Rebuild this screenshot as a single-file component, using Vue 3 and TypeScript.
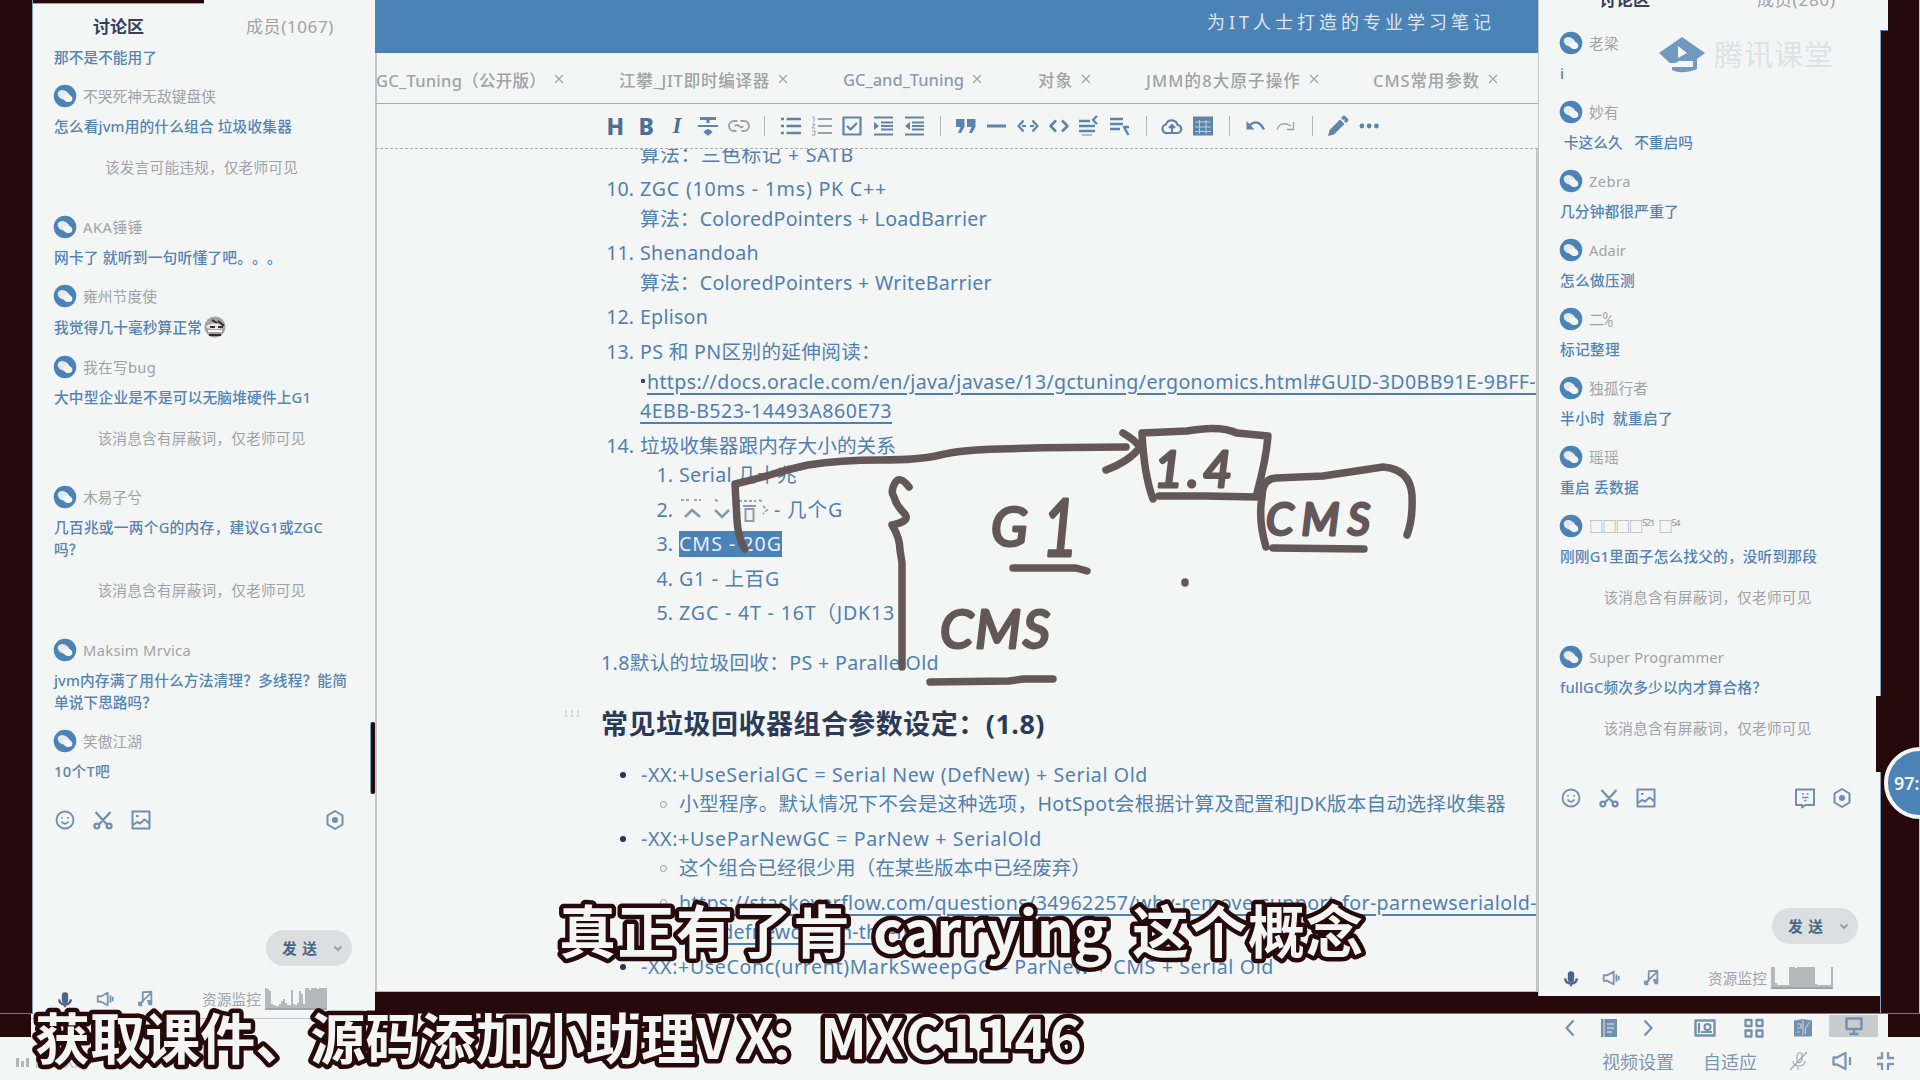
<script setup lang="ts">
import { h } from 'vue'
import type { FunctionalComponent } from 'vue'

interface Message {
  name?: string
  nameWidth?: number
  lines: { text: string; width: number; emoji?: boolean }[]
  notice?: { text: string; width: number }
}
interface DocLine {
  kind: 'top' | 'next'
  level: 1 | 2
  marker?: string
  text: string
  width: number
  variant?: 'link' | 'selected' | 'covered' | 'bulletlink'
}

const hidden = { text: '该消息含有屏蔽词，仅老师可见', width: 208 }

const leftMessages: Message[] = [
  { lines: [{ text: '那不是不能用了', width: 103 }] },
  {
    name: '不哭死神无敌键盘侠', nameWidth: 133,
    lines: [{ text: '怎么看jvm用的什么组合 垃圾收集器', width: 238 }],
    notice: { text: '该发言可能违规，仅老师可见', width: 193 },
  },
  { name: 'AKA锤锤', nameWidth: 60, lines: [{ text: '网卡了 就听到一句听懂了吧。。。', width: 228 }] },
  { name: '雍州节度使', nameWidth: 74, lines: [{ text: '我觉得几十毫秒算正常', width: 148, emoji: true }] },
  { name: '我在写bug', nameWidth: 73, lines: [{ text: '大中型企业是不是可以无脑堆硬件上G1', width: 257 }], notice: hidden },
  { name: '木易子兮', nameWidth: 59, lines: [{ text: '几百兆或一两个G的内存，建议G1或ZGC', width: 269 }, { text: '吗？', width: 29 }], notice: hidden },
  { name: 'Maksim Mrvica', nameWidth: 108, lines: [{ text: 'jvm内存满了用什么方法清理？多线程？能简', width: 293 }, { text: '单说下思路吗？', width: 103 }] },
  { name: '笑傲江湖', nameWidth: 59, lines: [{ text: '10个T吧', width: 56 }] },
]

const rightMessages: Message[] = [
  { name: '老梁', nameWidth: 30, lines: [{ text: 'i', width: 8 }] },
  { name: '妙有', nameWidth: 30, lines: [{ text: ' 卡这么久   不重启吗', width: 133 }] },
  { name: 'Zebra', nameWidth: 42, lines: [{ text: '几分钟都很严重了', width: 119 }] },
  { name: 'Adair', nameWidth: 37, lines: [{ text: '怎么做压测', width: 75 }] },
  { name: '二⁰⁄₀', nameWidth: 23, lines: [{ text: '标记整理', width: 60 }] },
  { name: '独孤行者', nameWidth: 59, lines: [{ text: '半小时  就重启了', width: 113 }] },
  { name: '瑶瑶', nameWidth: 30, lines: [{ text: '重启 丢数据', width: 79 }] },
  { name: '□□□□⁵²¹  □⁵⁴', nameWidth: 90, lines: [{ text: '刚刚G1里面子怎么找父的，没听到那段', width: 257 }], notice: hidden },
  { name: 'Super Programmer', nameWidth: 135, lines: [{ text: 'fullGC频次多少以内才算合格？', width: 207 }], notice: hidden },
]

const tabs = [
  { text: 'GC_Tuning（公开版）', width: 170, slot: 243 },
  { text: '江攀_JIT即时编译器', width: 151, slot: 224 },
  { text: 'GC_and_Tuning', width: 121, slot: 195 },
  { text: '对象', width: 35, slot: 108 },
  { text: 'JMM的8大原子操作', width: 155, slot: 227 },
  { text: 'CMS常用参数', width: 107, slot: 150 },
]

const tools = ['H', 'B', 'I', 'strike', 'link', '|', 'ul', 'ol', 'check', 'indent', 'outdent', '|', 'quote', 'minus', 'arrows', 'code', 'rowUp', 'rowDown', '|', 'cloud', 'table', '|', 'undo', 'redo', '|', 'pencil', 'dots']

const gcList: DocLine[] = [
  { kind: 'next', level: 1, text: '算法：三色标记 + SATB', width: 214 },
  { kind: 'top', level: 1, marker: '10.', text: 'ZGC (10ms - 1ms) PK C++', width: 247 },
  { kind: 'next', level: 1, text: '算法：ColoredPointers + LoadBarrier', width: 347 },
  { kind: 'top', level: 1, marker: '11.', text: 'Shenandoah', width: 119 },
  { kind: 'next', level: 1, text: '算法：ColoredPointers + WriteBarrier', width: 352 },
  { kind: 'top', level: 1, marker: '12.', text: 'Eplison', width: 68 },
  { kind: 'top', level: 1, marker: '13.', text: 'PS 和 PN区别的延伸阅读：', width: 241 },
  { kind: 'next', level: 1, text: 'https://docs.oracle.com/en/java/javase/13/gctuning/ergonomics.html#GUID-3D0BB91E-9BFF-', width: 889, variant: 'bulletlink' },
  { kind: 'next', level: 1, text: '4EBB-B523-14493A860E73', width: 252, variant: 'link' },
  { kind: 'top', level: 1, marker: '14.', text: '垃圾收集器跟内存大小的关系', width: 256 },
  { kind: 'next', level: 2, marker: '1.', text: 'Serial 几十兆', width: 118 },
  { kind: 'top', level: 2, marker: '2.', text: '- 几个G', width: 69, variant: 'covered' },
  { kind: 'top', level: 2, marker: '3.', text: 'CMS - 20G', width: 103, variant: 'selected' },
  { kind: 'top', level: 2, marker: '4.', text: 'G1 - 上百G', width: 101 },
  { kind: 'top', level: 2, marker: '5.', text: 'ZGC - 4T - 16T（JDK13', width: 216 },
]

const paramList: DocLine[] = [
  { kind: 'next', level: 1, marker: '•', text: '-XX:+UseSerialGC = Serial New (DefNew) + Serial Old', width: 507 },
  { kind: 'next', level: 2, marker: 'o', text: '小型程序。默认情况下不会是这种选项，HotSpot会根据计算及配置和JDK版本自动选择收集器', width: 827 },
  { kind: 'top', level: 1, marker: '•', text: '-XX:+UseParNewGC = ParNew + SerialOld', width: 401 },
  { kind: 'next', level: 2, marker: 'o', text: '这个组合已经很少用（在某些版本中已经废弃）', width: 412 },
  { kind: 'top', level: 2, marker: 'o', text: 'https://stackoverflow.com/questions/34962257/why-remove-support-for-parnewserialold-', width: 858, variant: 'link' },
  { kind: 'next', level: 2, text: 'and-defnewcms-in-the-future', width: 275, variant: 'link' },
  { kind: 'top', level: 1, marker: '•', text: '-XX:+UseConc(urrent)MarkSweepGC = ParNew + CMS + Serial Old', width: 633 },
]

const leftBars = [22, 19, 17, 4, 3, 2, 2, 4, 7, 9, 5, 3, 3, 18, 4, 3, 5, 17, 14, 4, 22, 20, 18, 22, 20, 22, 19, 20, 21, 22, 21]
const rightBars = [22, 20, 4, 2, 2, 2, 2, 2, 2, 20, 20, 21, 19, 21, 22, 22, 20, 22, 20, 21, 22, 20, 3, 2, 2, 2, 2, 2, 2, 2, 22]

/* Tunes tracking so that a label occupies the given width in pixels. */
const vFit = {
  mounted(el: HTMLElement, binding: { value?: number }) {
    if (!binding.value) return
    const count = Array.from(el.textContent ?? '').length
    const natural = el.getBoundingClientRect().width
    el.style.letterSpacing = `${((binding.value - natural) / count).toFixed(3)}px`
  },
}

type Shape = { d: string; fill?: boolean; w?: number; light?: boolean }
const shapes: Record<string, Shape[]> = {
  strike: [{ d: 'M3 3.500H19M11 3.500V8M11 14V19M7.500 16L11 19L14.500 16', w: 3 }, { d: 'M1 11H21', w: 2 }],
  link: [{ d: 'M9.500 6H6a5 5 0 0 0 0 10H8.500M12.500 6H16a5 5 0 0 1 0 10H13.500M7 11.500Q8 9 11 11T15 11', w: 2 }],
  ul: [{ d: 'M6.500 4H21M6.500 11H21M6.500 18H21M1 4H4M1 11H4M1 18H4', w: 2.6 }],
  ol: [{ d: 'M7 4H21M7 11H21M7 18H21', w: 2 }, { d: 'M1.500 2H3V7M1 9H4L1 13H4M1 16H4V20H1', w: 1 }],
  check: [{ d: 'M2.500 2.500H19.500V19.500H2.500ZM6 11L9.500 14.500L16 8', w: 2.2 }],
  indent: [{ d: 'M2 2.500H21M9 7.500H21M9 11H21M9 14.500H21M2 19.500H21', w: 2.2 }, { d: 'M2 7L7 11L2 15Z', fill: true }],
  outdent: [{ d: 'M2 2.500H21M9 7.500H21M9 11H21M9 14.500H21M2 19.500H21', w: 2.2 }, { d: 'M7 7L2 11L7 15Z', fill: true }],
  quote: [{ d: 'M1 4H9.500V12L6 18H3L5.500 12H1ZM12 4H20.500V12L17 18H14L16.500 12H12Z', fill: true }],
  minus: [{ d: 'M1 11H20', w: 3 }],
  arrows: [{ d: 'M6.500 5.500L1.500 11L6.500 16.500M15.500 5.500L20.500 11L15.500 16.500M5 11H9M13 11H17', w: 2.2 }],
  code: [{ d: 'M8 5.500L2.500 11L8 16.500M14 5.500L19.500 11L14 16.500', w: 2.6 }],
  rowUp: [{ d: 'M1 6H12M1 11H17M1 16H17M19 1L15 5L19 9', w: 2.4 }, { d: 'M4 20H14', w: 1 }],
  rowDown: [{ d: 'M1 4H14M1 9H14M1 14H11', w: 2.4 }, { d: 'M20 12H15L19.500 20', w: 2.4 }],
  cloud: [{ d: 'M6.500 18H16a4 4 0 0 0 .5-8A6 6 0 0 0 5 9.500A4.300 4.300 0 0 0 6.500 18ZM11 17V10M8 13L11 10L14 13', w: 2.2 }],
  table: [{ d: 'M1 1.500H21V20.500H1Z', fill: true }, { d: 'M3 7H19M3 12H19M3 16.500H19M7.500 5V19M14 5V19', w: 1, light: true }],
  undo: [{ d: 'M2.500 6V14.500H10.500Z', fill: true }, { d: 'M6 10Q14 3 20 14.500', w: 2.4 }],
  redo: [{ d: 'M2 14.500Q6 5 16 11M18.500 7V14.500H12', w: 1.4 }],
  pencil: [{ d: 'M1 21L2.500 15L13 4.500L17.500 9L7 19.500Z', fill: true }, { d: 'M15 4L17 2L20 5L18 7', w: 3 }],
  dots: [{ d: 'M1.500 11a2.400 2.400 0 1 0 4.800 0a2.400 2.400 0 1 0-4.800 0M8.700 11a2.400 2.400 0 1 0 4.800 0a2.400 2.400 0 1 0-4.800 0M16 11a2.400 2.400 0 1 0 4.800 0a2.400 2.400 0 1 0-4.800 0', fill: true }],
  smile: [{ d: 'M2.500 11a8.500 8.500 0 1 0 17 0a8.500 8.500 0 1 0-17 0M7.500 12.500Q11 17 14.500 12.500M8 8V9.500M14 8V9.500', w: 1.8 }],
  scissors: [{ d: 'M3.500 3L15.500 16M18.500 3L6.500 16M2.500 17a2.400 2.400 0 1 0 4.800 0a2.400 2.400 0 1 0-4.800 0M14.700 17a2.400 2.400 0 1 0 4.800 0a2.400 2.400 0 1 0-4.800 0', w: 2.3 }],
  image: [{ d: 'M2.500 2.500H19.500V19.500H2.500ZM3 16L7 13L10 14.500L14.500 10.500L19 14M6 7H8.500', w: 2 }],
  hex: [{ d: 'M11 2L18.500 6.500V15.500L11 20L3.500 15.500V6.500Z', w: 2 }, { d: 'M8 11a3 3 0 1 0 6 0a3 3 0 1 0-6 0', fill: true }],
  bubble: [{ d: 'M2 2.500H20V18H11.500L8 20.500V18H2Z', w: 2 }, { d: 'M8 7H10M12.500 7H14.500M8 10.500H14.500M10 13.500H12.500', w: 1.5 }],
  mic: [{ d: 'M7.500 7a3.500 3.500 0 0 1 7 0V12a3.500 3.500 0 0 1-7 0Z', fill: true }, { d: 'M4.500 11.500Q5 17 11 17T17.500 11.500M11 17V20', w: 2.6 }],
  sound: [{ d: 'M3 8H7L14 4V18L7 14H3ZM17 7V15M19.500 8.500V13.500', w: 2 }],
  music: [{ d: 'M8.500 15V3.500L18 3V13.500M4 17.500L18 4', w: 2 }, { d: 'M3 14H8V19H4ZM13 12H19V18H15Z', fill: true }],
  left: [{ d: 'M14.500 3.500L7.500 11L14.500 18.500', w: 2.2 }],
  right: [{ d: 'M7.500 3.500L14.500 11L7.500 18.500', w: 2.2 }],
  notebook: [{ d: 'M3 2H19V20H3Z', fill: true }, { d: 'M6 2V20M9 7H16M9 11H16M9 15H14', w: 1.3, light: true }],
  photo: [{ d: 'M1.500 3.500H20.500V18.500H1.500Z', w: 2.4 }, { d: 'M5 6V16M7 15H18M10.500 10a3 3 0 1 0 6 0a3 3 0 1 0-6 0', w: 2.2 }],
  grid: [{ d: 'M2.500 3H8.500V9H2.500ZM13.500 3H19.500V9H13.500ZM2.500 13.500H8.500V19.500H2.500ZM13.500 13.500H19.500V19.500H13.500Z', w: 2.3 }],
  book: [{ d: 'M2 3.500L11 2L20 3.500V19.500H2Z', fill: true }, { d: 'M5 7H9V11H5M13.500 17V11L17.500 5M11 3V18M5 15H8', w: 1.2, light: true }],
  board: [{ d: 'M3.500 3.500H18.500V14H3.500ZM11 14V19M6.500 19H15.500', w: 2.4 }],
  micOff: [{ d: 'M9 12V5Q11 1 14 4V10Q12 14 9 12M5 11Q5 16 12 16Q17 15 17 11M2 20L19 2M10 17V20', w: 1.1 }],
  volume: [{ d: 'M2.500 7.500H6L14.500 3V19L6 14.500H2.500ZM19 7V15', w: 2.3 }],
  shrink: [{ d: 'M3 8H8V2M14 2V8H20M3 14H8V20M20 14H14V20', w: 2.3 }],
}

const Icon: FunctionalComponent<{ name: string; size?: number }> = (props) =>
  h(
    'svg',
    { width: props.size ?? 22, height: props.size ?? 22, viewBox: '0 0 22 22', fill: 'none', 'stroke-linejoin': 'round' },
    (shapes[props.name] ?? []).map((s) =>
      h('path', {
        d: s.d,
        fill: s.fill ? 'currentColor' : 'none',
        stroke: s.fill ? 'none' : s.light ? '#c3ced8' : 'currentColor',
        'stroke-width': s.w ?? 2,
      }),
    ),
  )
Icon.props = ['name', 'size']

const panels = [
  { id: 'left', members: '成员(1067)', membersWidth: 88, list: leftMessages, bars: leftBars, chat: false },
  { id: 'right', members: '成员(280)', membersWidth: 79, list: rightMessages, bars: rightBars, chat: true },
]
</script>

<template>
  <div class="screen">
    <div class="main">
      <div class="bezel bezel-left"></div>

      <template v-for="p in panels" :key="p.id">
        <aside class="panel" :class="p.id">
          <div v-if="p.id === 'left'" class="notch"></div>
          <header class="panel-tabs">
            <b v-fit="51">讨论区</b>
            <span v-fit="p.membersWidth">{{ p.members }}</span>
          </header>
          <div class="messages">
            <div v-for="(m, i) in p.list" :key="i" class="message">
              <div v-if="m.name" class="author">
                <svg class="avatar" width="24" height="24" viewBox="0 0 24 24">
                  <circle cx="12" cy="12" r="11.300" fill="#4c83b6" />
                  <ellipse cx="10.500" cy="10.800" rx="6" ry="4.500" transform="rotate(22 10.500 10.800)" fill="#e5e9ec" />
                  <ellipse cx="14.800" cy="14.200" rx="4.700" ry="3.700" transform="rotate(22 14.800 14.200)" fill="#f4f6f5" />
                </svg>
                <span v-fit="m.nameWidth" class="fit">{{ m.name }}</span>
              </div>
              <div class="body">
                <div v-for="l in m.lines" :key="l.text" class="body-line" :class="{ tall: l.emoji }">
                  <span v-fit="l.width" class="fit">{{ l.text }}</span>
                  <svg v-if="l.emoji" width="24" height="24" viewBox="0 0 24 24">
                    <circle cx="12" cy="12" r="10.500" fill="#a0a2a6" />
                    <path d="M3 11Q12 5 22 12Q15 16 4 13Z" fill="#e5e7e7" />
                    <path d="M9 5l5 3M15 6l6 5M6 20h12M7 12h5M15 12h5" stroke="#3c292b" stroke-width="2" />
                    <path d="M5 16h14" stroke="#f4f6f5" stroke-width="2" />
                  </svg>
                </div>
              </div>
              <div v-if="m.notice" class="notice"><span v-fit="m.notice.width" class="fit">{{ m.notice.text }}</span></div>
            </div>
          </div>
          <div class="composer">
            <div class="composer-tools">
              <Icon name="smile" /><Icon name="scissors" /><Icon name="image" />
              <span class="grow"></span>
              <Icon v-if="p.chat" name="bubble" /><Icon name="hex" />
            </div>
            <div class="send">
              <b v-fit="36" class="fit">发 送</b>
              <svg width="10" height="10" viewBox="0 0 10 10"><path d="M1.500 3.500L5 7L8.500 3.500" fill="none" stroke="#9a9fa5" stroke-width="2" /></svg>
            </div>
          </div>
          <div class="status">
            <span class="mic"><Icon name="mic" :size="20" /></span><Icon name="sound" :size="20" /><Icon name="music" :size="20" />
            <span class="grow"></span>
            <span v-fit="59" class="fit monitor">资源监控</span>
            <span class="graph"><i v-for="(b, i) in p.bars" :key="i" :style="{ height: b + 'px' }"></i></span>
          </div>
          <div v-if="p.id === 'left'" class="scrollbar"></div>
          <div v-if="p.id === 'right'" class="watermark">
            <svg width="48" height="38" viewBox="0 0 48 38">
              <path d="M24 1L47 17L39 23V33Q24 39 14 34V31H35V25H21L14 29L1 17Z" fill="#7199bf" />
              <path d="M20 10L29 17L20 22Z" fill="#f4f6f5" />
              <path d="M10 27H33V31H14Z" fill="#f4f6f5" />
            </svg>
            <span v-fit="120" class="fit">腾讯课堂</span>
          </div>
        </aside>

        <section v-if="p.id === 'left'" class="editor">
          <div class="banner"><span v-fit="288" class="fit">为IT人士打造的专业学习笔记</span></div>
          <nav class="tabs">
            <div v-for="t in tabs" :key="t.text" class="tab" :style="{ width: t.slot + 'px' }">
              <span v-fit="t.width" class="fit">{{ t.text }}</span>
              <svg width="10" height="10" viewBox="0 0 10 10"><path d="M1 1L9 9M9 1L1 9" stroke="#a0a2a6" stroke-width="1.200" /></svg>
            </div>
          </nav>
          <div class="toolbar">
            <template v-for="(t, i) in tools" :key="i">
              <span v-if="t === '|'" class="sep"></span>
              <span v-else class="tool" :class="{ letter: t.length === 1, italic: t === 'I', dim: t === 'redo' || t === 'ol' || t === 'link' }">
                <template v-if="t.length === 1">{{ t }}</template>
                <Icon v-else :name="t" />
              </span>
            </template>
          </div>
          <article class="doc">
            <div class="list numbers">
              <div v-for="(l, i) in gcList" :key="i" class="line" :class="[l.kind, 'level-' + l.level]">
                <span class="marker">{{ l.marker }}</span>
                <i v-if="l.variant === 'bulletlink'" class="dot"></i>
                <svg v-if="l.variant === 'covered'" class="find" width="95" height="30" viewBox="0 0 95 30">
                  <path d="M2 6H10M15 6H22M36 6L39 7M60 7H77M80 6L84 8M84 12L88 16L84 20" fill="none" stroke="#a0a2a6" stroke-width="2" stroke-dasharray="3 2" />
                  <path d="M6 23L13 16L21 23M36 16L43 23L50 16" fill="none" stroke="#8199b2" stroke-width="2.500" />
                  <path d="M64 12H77M66.500 15H74.500V27H66.500Z" fill="none" stroke="#8c9baf" stroke-width="2" />
                </svg>
                <span v-fit="l.width" class="fit" :class="l.variant">{{ l.text }}</span>
              </div>
            </div>
            <p><span v-fit="338" class="fit">1.8默认的垃圾回收：PS + ParallelOld</span></p>
            <h2>
              <svg class="handle" width="15" height="8" viewBox="0 0 15 8"><path d="M1 0V8M7 0V8M13 0V8" stroke="#b4b6b9" stroke-dasharray="3 1" /></svg>
              <span v-fit="444" class="fit">常见垃圾回收器组合参数设定：(1.8)</span>
            </h2>
            <div class="list bullets">
              <div v-for="(l, i) in paramList" :key="i" class="line" :class="[l.kind, 'level-' + l.level]">
                <span class="marker"><i v-if="l.marker" :class="l.marker === 'o' ? 'ring' : 'disc'"></i></span>
                <span v-fit="l.width" class="fit" :class="l.variant">{{ l.text }}</span>
              </div>
            </div>
          </article>
        </section>
      </template>

      <div class="bezel bezel-right">
        <i class="corner"></i><i class="step"></i>
        <div class="badge"><b>97:</b></div>
      </div>
    </div>

    <footer class="footer">
      <div class="footer-top">
        <i class="dark dark-left"></i>
        <span class="grow footer-line"></span>
        <div class="views">
          <Icon name="left" /><Icon name="notebook" /><Icon name="right" />
          <Icon name="photo" /><Icon name="grid" /><Icon name="book" />
          <span class="active"><Icon name="board" /></span>
        </div>
        <i class="dark dark-right"></i>
      </div>
      <div class="footer-bottom">
        <span class="network"><i></i><i></i><i></i><em>网络状态</em></span>
        <span class="grow"></span>
        <span v-fit="72" class="fit setting">视频设置</span>
        <span v-fit="54" class="fit auto">自适应</span>
        <span class="off"><Icon name="micOff" /></span><Icon name="volume" /><Icon name="shrink" />
      </div>
    </footer>

    <svg class="ink" width="1920" height="1080" viewBox="0 0 1920 1080">
      <g class="rim">
        <path d="M745 549Q738 538 737 520T735 484Q760 478 773 474T808 465Q840 460 880 460T940 455T1000 449Q1060 447 1126 447" />
        <path d="M1123 433Q1135 440 1140 447Q1130 461 1106 470" />
        <path d="M1153 499Q1144 475 1142 433L1187 431Q1220 425 1237 433L1268 436Q1266 460 1257 493M1159 496L1205 496L1258 497" />
        <path d="M1266 547Q1258 520 1262 497Q1262 479 1276 478L1323 476L1383 467Q1410 469 1412 495Q1413 520 1407 535M1273 548L1364 549" />
        <path d="M909 487Q900 475 895 483T894 497Q896 505 904 513T892 525Q900 538 900 550L902 563V667" />
        <path d="M1013 568L1076 568L1087 571M930 682L1009 681L1023 679L1053 679M1185 582V583" />
      </g>
      <g class="words">
        <text x="1154" y="487" font-size="50" textLength="78">1.4</text>
        <text x="1266" y="535" font-size="44" textLength="104">CMS</text>
        <text x="991" y="546" font-size="54">G</text>
        <text x="1042" y="556" font-size="80" textLength="36" lengthAdjust="spacingAndGlyphs">1</text>
        <text x="940" y="648" font-size="53" textLength="110">CMS</text>
      </g>
    </svg>

    <svg class="captions" width="1920" height="1080" viewBox="0 0 1920 1080">
      <g class="caption" font-size="57">
        <text x="559" y="953" textLength="291">真正有了肯</text>
        <text x="873" y="953" font-size="58" textLength="235">carrying</text>
        <text x="1132" y="953" textLength="231">这个概念</text>
      </g>
      <g class="caption" font-size="55">
        <text x="35" y="1059" textLength="661">获取课件、源码添加小助理</text>
        <text x="696" y="1059" textLength="78">VX</text>
        <text x="768" y="1059">：</text>
        <text x="820" y="1059" textLength="262">MXC1146</text>
      </g>
    </svg>
  </div>
</template>

<style>
body { background: #f4f6f5; overflow: hidden; }
</style>

<style scoped>
.screen {
  position: relative;
  display: flex;
  flex-direction: column;
  width: 1920px;
  height: 1080px;
  overflow: hidden;
  background: #f4f6f5;
  color: #4c83b6;
  font-family: "Noto Sans", "Noto Sans CJK SC", sans-serif;
  text-spacing-trim: space-all;
}
svg { display: block; flex: none; }
.fit { display: inline-block; white-space: pre; flex: none; }
.grow { flex: 1; }
.main { display: flex; align-items: flex-start; height: 1014px; background: #260a0b; flex: none; border-bottom: 1px solid #4c83b6; box-sizing: border-box; }
.bezel { flex: none; height: 1013px; box-sizing: border-box; }
.bezel-left { width: 33px; border-right: 1px solid #7c9fc2; }

.panel { position: relative; display: flex; flex-direction: column; flex: none; box-sizing: border-box; background: #f4f6f5; overflow: hidden; font-size: 14.700px; line-height: 22px; }
.panel.left { width: 342px; height: 1014px; padding-left: 21px; }
.panel.right { width: 342px; height: 996px; padding-left: 21px; border-left: 1px solid #c4c6c8; }
.notch { position: absolute; left: 0; top: 0; width: 171px; height: 3px; background: #260a0b; border-bottom: 1px solid #a0a2a6; }
.panel-tabs { display: flex; flex: none; height: 46px; align-items: center; color: #a0a2a6; font-size: 17px; white-space: nowrap; }
.left .panel-tabs { padding: 8px 0 0 39px; box-sizing: border-box; }
.left .panel-tabs span { margin-left: 102px; }
.right .panel-tabs { height: 31px; padding: 2px 0 0 39px; margin-top: -17px; box-sizing: border-box; }
.right .panel-tabs span { margin-left: 107px; }
.panel-tabs b { color: #33405a; }
.messages { flex: none; }
.left .messages { height: 760px; }
.right .messages { height: 756px; padding-top: 18px; box-sizing: content-box; }
.message { display: flex; flex-direction: column; }
.message:first-child > .body:first-child { padding-top: 0; }
.author { display: flex; align-items: center; height: 22px; margin-bottom: 8px; color: #a0a2a6; }
.avatar { margin: -1px 6px -1px -1px; }
.body { margin-bottom: 17px; color: #5484b3; font-weight: 500; }
.body-line { display: flex; align-items: center; height: 22px; }
.tall { height: 24px; }
.tall svg { margin-left: 1px; }
.notice { width: 295px; height: 22px; padding: 2px 0 37.500px; text-align: center; color: #9fa3a9; white-space: nowrap; }
.composer { flex: none; height: 158px; }
.left .composer { margin-top: 3px; }
.composer-tools { display: flex; width: 294px; height: 22px; color: #6f8fb0; }
.left .composer-tools svg { margin: 0 16px 0 0; }
.right .composer-tools { margin-top: -1px; }
.right .composer-tools svg { margin: 0 15.500px 0 0; }
.composer-tools svg:last-child { margin-right: 0 !important; }
.left .composer-tools { width: 292px; }
.right .composer-tools { width: 293px; }
.send { display: flex; align-items: center; box-sizing: border-box; width: 86px; height: 36px; margin: 99px 0 0 212px; padding-left: 16px; border-radius: 18px; background: #dcdedf; color: #4a6583; }
.send svg { margin-left: 15px; }
.status { display: flex; flex: none; align-items: center; width: 273px; height: 22px; margin-top: 21px; color: #7c96b1; }
.status > svg { margin-left: 20px; }
.mic { margin-left: 1px; color: #4a6587; }
.monitor { color: #9fa3a9; margin-right: 4px; }
.graph { display: flex; align-items: flex-end; width: 62px; height: 20px; border-bottom: 2px solid #a0a2a6; overflow: hidden; }
.graph i { width: 2px; background: #b6b8bb; }
.scrollbar { position: absolute; right: 0; top: 722px; width: 4px; height: 72px; border-radius: 2px; background: #260a0b; box-shadow: -1px 0 #7ba0c4; }
.watermark { position: absolute; left: 119px; top: 34px; display: flex; align-items: center; height: 42px; color: #dfe1e3; font-size: 29px; }
.watermark span { margin-left: 8px; }

.editor { display: flex; flex-direction: column; flex: none; width: 1163px; height: 992px; background: #f4f6f5; overflow: hidden; box-sizing: border-box; border-bottom: 1px solid #a9bccf; }
.banner { flex: none; height: 53px; background: #4c83b6; color: #dfe5eb; font-size: 18px; line-height: 44px; box-sizing: border-box; padding-left: 832px; }
.tabs { display: flex; align-items: center; flex: none; height: 51px; padding-top: 3px; box-sizing: border-box; border-bottom: 1px solid #a9abae; border-left: 2px solid #c4c6c8; font-size: 16.500px; color: #a0a2a6; font-weight: 500; }
.tab { display: flex; align-items: center; flex: none; }
.tab:first-child { margin-left: -1px; }
.tab:nth-child(3) { color: #8a9db2; }
.tab svg { margin: -1px 0 0 8px; }
.toolbar { display: flex; align-items: center; flex: none; height: 45px; padding-left: 223px; box-sizing: border-box; border-bottom: 1px dashed #a9abae; border-left: 2px solid #c4c6c8; color: #5d84ab; }
.tool { display: flex; justify-content: center; width: 30.800px; }
.letter { font-size: 23px; line-height: 24px; font-weight: 800; color: #4d6f94; }
.italic { font-style: italic; font-family: "Liberation Serif", serif; }
.dim { color: #9ba1a8; }
.sep { width: 21.400px; height: 20px; background: linear-gradient(#b4b6b9, #b4b6b9) center / 1px 100% no-repeat; }
.doc { flex: 1; padding-left: 225px; box-sizing: border-box; border-left: 2px solid #c4c6c8; border-right: 2px solid #c4c6c8; font-size: 19.600px; line-height: 29.600px; overflow: hidden; color: #5080b0; white-space: nowrap; }
.numbers { margin-top: -9.200px; }
.line { display: flex; align-items: center; height: 29.600px; }
.top { margin-top: 4.900px; }
.marker { flex: none; text-align: right; box-sizing: border-box; padding-right: 6px; }
.level-1 .marker { width: 38px; }
.level-2 .marker { width: 77px; }
.link, .bulletlink { text-decoration: underline; text-decoration-thickness: 2px; text-underline-offset: 4px; }
.dot { width: 4px; height: 4px; margin: 0 2px 0 1px; background: #2c4a6c; flex: none; border-radius: 1px; }
.selected { height: 26px; line-height: 26px; background: #4c83b6; color: #e9edf0; }
.find { position: relative; }
p { height: 29.600px; margin: 20.400px 0 0 -1px; }
h2 { position: relative; display: flex; align-items: center; height: 40px; margin: 26px 0 0 -1px; font-size: 27px; line-height: 40px; color: #2b3b57; }
.handle { position: absolute; left: -36px; top: 6px; }
.bullets { margin-top: 16px; }
.bullets .marker { display: flex; justify-content: flex-end; }
.bullets .level-1 .marker { width: 39px; padding-right: 15px; }
.disc { width: 6px; height: 6px; border-radius: 3px; background: #29354b; }
.bullets .level-2 .marker { padding-right: 12px; }
.ring { width: 5px; height: 5px; border: 1.500px solid #8c99a8; border-radius: 50%; }

.bezel-right { position: relative; flex: 1; border-left: 1px solid #7c9fc2; border-right: 1px solid #c4c6c8; }
.corner { position: absolute; left: -1px; top: 0; width: 8px; height: 30px; background: #f4f6f5; border-bottom: 1px solid #4c83b6; }
.step { position: absolute; left: -5px; top: 696px; width: 6px; height: 76px; background: #260a0b; }
.badge { position: absolute; left: 3px; top: 747px; width: 64px; height: 64px; border: 4px solid #f4f6f5; border-radius: 50%; background: #4c83b6; color: #f4f6f5; font-size: 18px; line-height: 64px; }
.badge b { padding-left: 6px; font-weight: 600; }

.footer { display: flex; flex-direction: column; height: 66px; color: #7191b1; }
.footer-top { display: flex; height: 23px; align-items: stretch; }
.dark { background: #260a0b; }
.dark-left { width: 31px; }
.dark-right { width: 32px; }
.footer-line { box-sizing: border-box; height: 5px; border-bottom: 1px solid #c4c6c8; max-width: 345px; margin-right: auto; }
.views { display: flex; width: 329px; align-items: center; padding-top: 4px; box-sizing: border-box; flex: none; }
.views > svg { margin-right: 17px; }
.views > svg:nth-child(3) { margin-right: 35px; }
.views > svg:nth-child(4), .views > svg:nth-child(5) { margin-right: 27px; }
.views > svg:nth-child(6) { margin-right: 15px; }
.active { display: flex; justify-content: center; width: 49px; background: #c9ccce; margin-top: -4px; }
.footer-bottom { display: flex; align-items: center; height: 43px; padding-right: 24px; font-size: 18px; color: #7c96b1; padding-top: 4px; box-sizing: border-box; }
.network { display: flex; align-items: flex-end; gap: 2px; margin-left: 16px; height: 12px; font-size: 13px; line-height: 12px; color: #b4b6b9; }
.network i { width: 3px; height: 9px; background: #b4b6b9; }
.network i:nth-child(2) { height: 6px; }
.network em { font-style: normal; margin-left: 4px; }
.setting { margin-left: -2px; }
.auto { margin: 0 31px 0 29px; }
.off { color: #a0a2a6; margin-right: 21px; }
.footer-bottom > svg { margin-right: 21px; }
.footer-bottom > svg:last-child { margin-right: 0; }

.ink, .captions { position: absolute; left: 0; top: 0; }
.rim { fill: none; stroke: #645759; stroke-width: 7.500px; stroke-linecap: round; stroke-linejoin: round; }
.words { fill: #645759; stroke: #645759; stroke-width: 3px; stroke-linejoin: round; font-family: Lato, sans-serif; font-style: italic; font-weight: 400; }
.caption { fill: #f4f6f5; stroke: #260a0b; stroke-width: 9px; stroke-linejoin: round; paint-order: stroke; font-family: "Noto Sans CJK SC", sans-serif; font-weight: 700; }
</style>
